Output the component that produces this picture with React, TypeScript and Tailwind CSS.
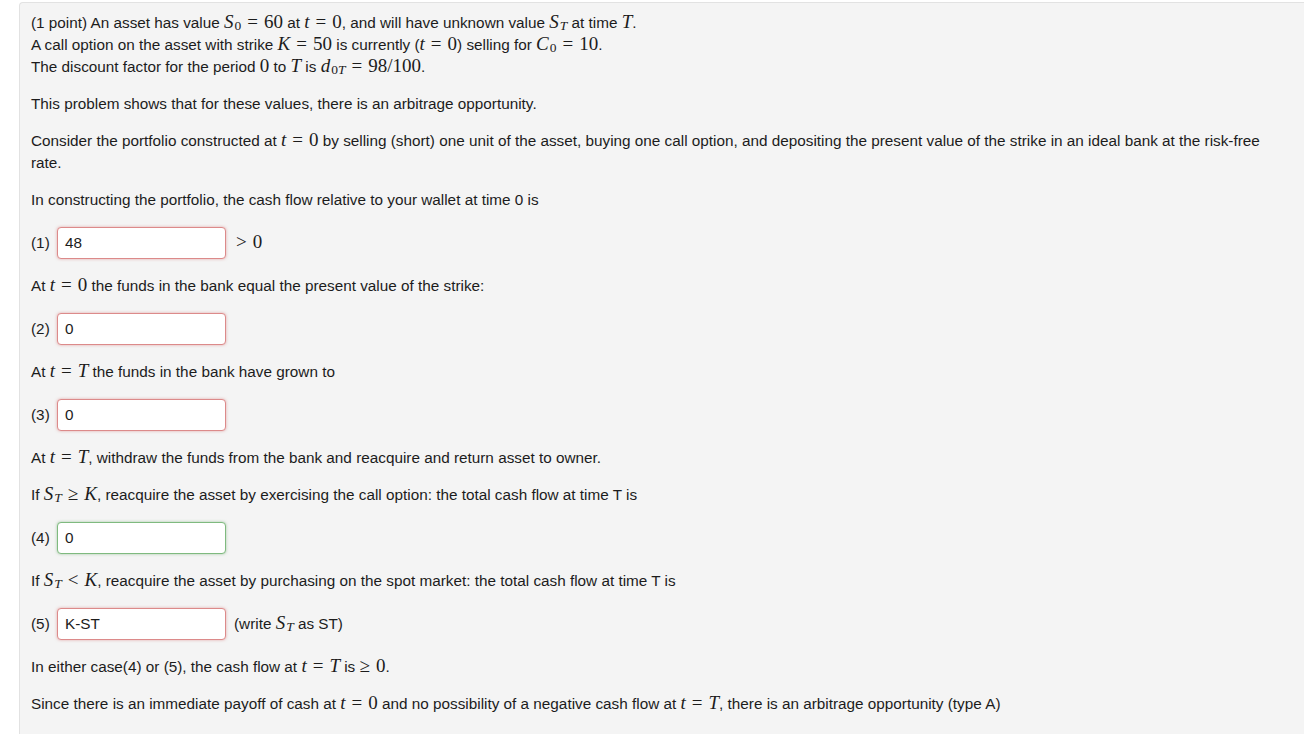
import React from "react";

const M = ({ children }: { children: React.ReactNode }) => (
  <span className="font-['Liberation_Serif',serif] text-[19px] leading-none whitespace-nowrap">{children}</span>
);

const V = ({ children }: { children: React.ReactNode }) => <i>{children}</i>;

const Sub = ({ children }: { children: React.ReactNode }) => (
  <sub className="text-[13.5px] leading-none relative -bottom-[2px] ml-[1px]">{children}</sub>
);

const Op = ({ children }: { children: React.ReactNode }) => <span className="mx-[6px]">{children}</span>;

const Answer = ({
  n,
  value,
  tone = "red",
  after,
}: {
  n: number;
  value: string;
  tone?: "red" | "green";
  after?: React.ReactNode;
}) => (
  <div className="flex items-center h-[32px] my-[16px]">
    <span className="w-[26px]">({n})</span>
    <div
      className={`w-[169px] h-[32px] rounded-[4px] bg-white border flex items-center px-[7px] ${
        tone === "green"
          ? "border-[#7fba7f] shadow-[0_0_3px_rgba(92,160,92,0.55)]"
          : "border-[#dc8a8a] shadow-[0_0_3px_rgba(210,90,90,0.5)]"
      }`}
    >
      {value}
    </div>
    {after}
  </div>
);

export default function App() {
  return (
    <div className="w-[1304px] h-[734px] overflow-hidden bg-white font-['Liberation_Sans',Arial,sans-serif] text-[15.3px] text-[#1c1c1c]">
      <div className="ml-[19px] mt-[2px] w-[1320px] h-[760px] bg-[#f4f4f4] border-l border-t border-[#e2e2e2] rounded-tl-[4px] pl-[11px] pr-[52px] pt-[9px] leading-[22px]">
        <div>
          <div>
            (1 point) An asset has value{" "}
            <M>
              <V>S</V>
              <Sub>0</Sub>
              <Op>=</Op>60
            </M>{" "}
            at{" "}
            <M>
              <V>t</V>
              <Op>=</Op>0
            </M>
            , and will have unknown value{" "}
            <M>
              <V>S</V>
              <Sub>
                <V>T</V>
              </Sub>
            </M>{" "}
            at time{" "}
            <M>
              <V>T</V>
            </M>
            .
          </div>
          <div>
            A call option on the asset with strike{" "}
            <M>
              <V>K</V>
              <Op>=</Op>50
            </M>{" "}
            is currently (
            <M>
              <V>t</V>
              <Op>=</Op>0
            </M>
            ) selling for{" "}
            <M>
              <V>C</V>
              <Sub>0</Sub>
              <Op>=</Op>10
            </M>
            .
          </div>
          <div>
            The discount factor for the period <M>0</M> to{" "}
            <M>
              <V>T</V>
            </M>{" "}
            is{" "}
            <M>
              <V>d</V>
              <Sub>
                0<V>T</V>
              </Sub>
              <Op>=</Op>98/100
            </M>
            .
          </div>
        </div>

        <p className="mt-[15px]">This problem shows that for these values, there is an arbitrage opportunity.</p>

        <p className="mt-[15px]">
          Consider the portfolio constructed at{" "}
          <M>
            <V>t</V>
            <Op>=</Op>0
          </M>{" "}
          by selling (short) one unit of the asset, buying one call option, and depositing the present value of the strike in an
          ideal bank at the risk-free rate.
        </p>

        <p className="mt-[15px]">In constructing the portfolio, the cash flow relative to your wallet at time 0 is</p>

        <Answer
          n={1}
          value="48"
          after={
            <span className="ml-[10px]">
              <M>
                <span className="mr-[6px]">&gt;</span>0
              </M>
            </span>
          }
        />

        <p>
          At{" "}
          <M>
            <V>t</V>
            <Op>=</Op>0
          </M>{" "}
          the funds in the bank equal the present value of the strike:
        </p>

        <Answer n={2} value="0" />

        <p>
          At{" "}
          <M>
            <V>t</V>
            <Op>=</Op>
            <V>T</V>
          </M>{" "}
          the funds in the bank have grown to
        </p>

        <Answer n={3} value="0" />

        <p>
          At{" "}
          <M>
            <V>t</V>
            <Op>=</Op>
            <V>T</V>
          </M>
          , withdraw the funds from the bank and reacquire and return asset to owner.
        </p>

        <p className="mt-[15px]">
          If{" "}
          <M>
            <V>S</V>
            <Sub>
              <V>T</V>
            </Sub>
            <Op>≥</Op>
            <V>K</V>
          </M>
          , reacquire the asset by exercising the call option: the total cash flow at time T is
        </p>

        <Answer n={4} value="0" tone="green" />

        <p>
          If{" "}
          <M>
            <V>S</V>
            <Sub>
              <V>T</V>
            </Sub>
            <Op>&lt;</Op>
            <V>K</V>
          </M>
          , reacquire the asset by purchasing on the spot market: the total cash flow at time T is
        </p>

        <Answer
          n={5}
          value="K-ST"
          after={
            <span className="ml-[8px]">
              (write{" "}
              <M>
                <V>S</V>
                <Sub>
                  <V>T</V>
                </Sub>
              </M>{" "}
              as ST)
            </span>
          }
        />

        <p>
          In either case(4) or (5), the cash flow at{" "}
          <M>
            <V>t</V>
            <Op>=</Op>
            <V>T</V>
          </M>{" "}
          is{" "}
          <M>
            <span className="mr-[6px]">≥</span>0
          </M>
          .
        </p>

        <p className="mt-[15px]">
          Since there is an immediate payoff of cash at{" "}
          <M>
            <V>t</V>
            <Op>=</Op>0
          </M>{" "}
          and no possibility of a negative cash flow at{" "}
          <M>
            <V>t</V>
            <Op>=</Op>
            <V>T</V>
          </M>
          , there is an arbitrage opportunity (type A)
        </p>
      </div>
    </div>
  );
}
